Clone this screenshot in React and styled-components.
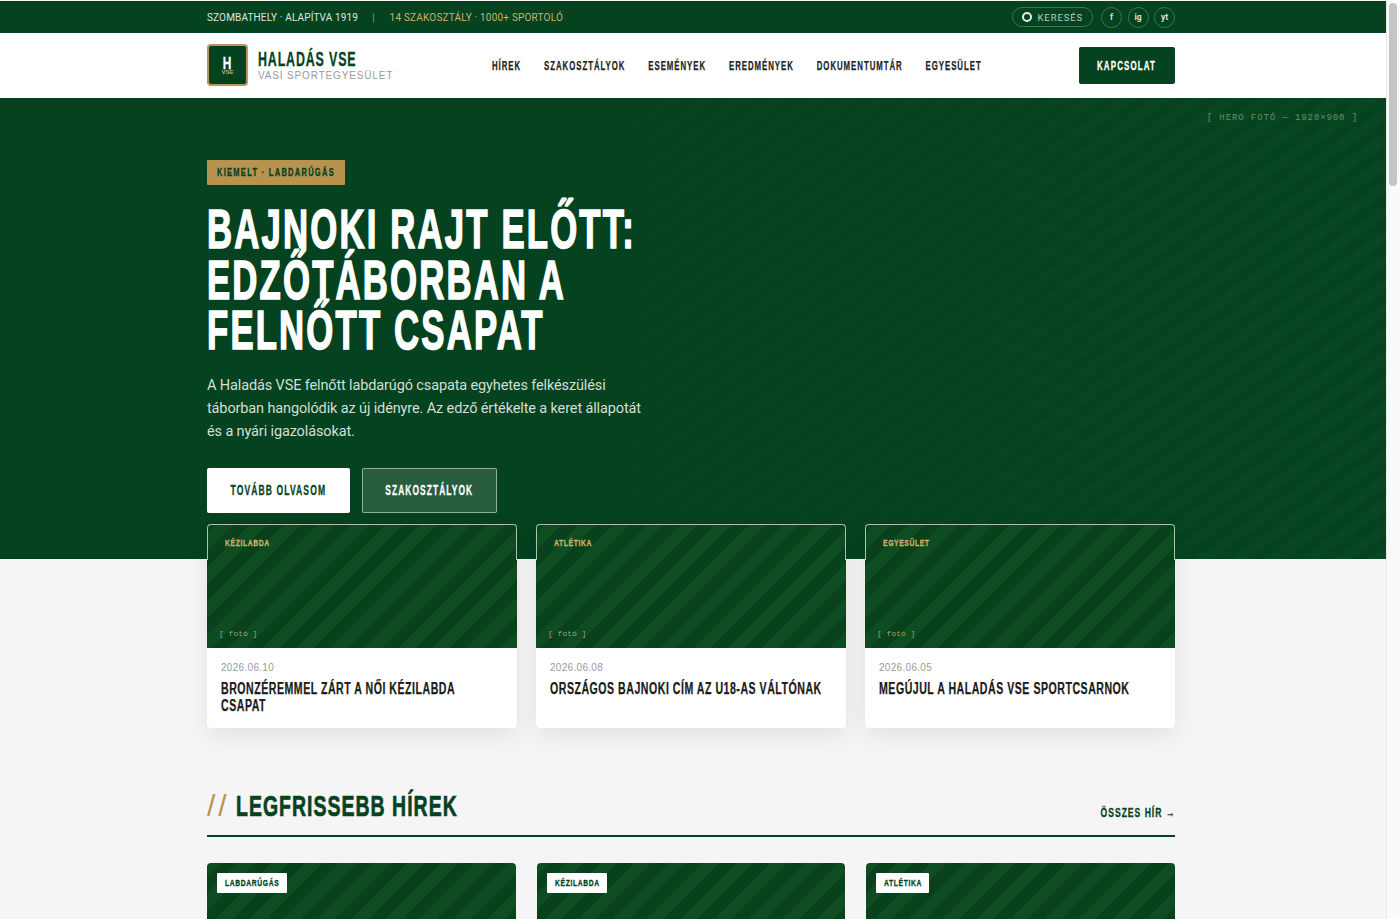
import React from 'react';
import styled, { createGlobalStyle } from 'styled-components';

const GlobalStyle = createGlobalStyle`
html, body { margin: 0; padding: 0; height: 100%; overflow: hidden; background: #fff; }
* { box-sizing: border-box; }
#root { height: 919px; overflow: hidden; }
`

const cond = `"Liberation Sans", Arial, sans-serif`;
const body = `Roboto, "Noto Sans", sans-serif`;
const arial = `"Liberation Sans", Arial, sans-serif`;
const mono = `"Liberation Mono", monospace`;

// no condensed face is installed, so headline text is squeezed horizontally
const Squeeze = styled.span`
display: inline-block;
flex: none;
white-space: nowrap;
transform: scaleX(${p => p.$s});
transform-origin: ${p => p.$o || 'left'} center;
-webkit-text-stroke: ${p => p.$stroke || '.3px'};
`
const Shell = styled.div`
display: flex;
height: 919px;
`
const Page = styled.div`
width: 1386px;
flex: none;
background: #f5f5f5;
padding-top: 1px;
overflow: hidden;
`
const ScrollTrack = styled.div`
flex: 1;
background: #fafafa;
border-left: 1px solid #ececec;
padding: 3px 3px 0 2px;
`
const ScrollThumb = styled.div`
height: 183px;
width: 8px;
border-radius: 4px;
background: #c4c4c4;
`
const Wrap = styled.div`
width: 968px;
margin-left: 207px;
display: flex;
align-items: center;
`
const TopBar = styled.div`
background: #05421f;
height: 32px;
display: flex;
align-items: center;
`
const TopLeft = styled.span`
font-family: ${body};
font-size: 10px;
letter-spacing: .15px;
color: #dfe8e0;
`
const TopDivider = styled.span`
font-family: ${body};
font-size: 10px;
color: #7fa088;
margin: 0 15px 0 14px;
`
const TopGold = styled.span`
font-family: ${body};
font-size: 10px;
letter-spacing: .2px;
color: #cbb36a;
`
const TopRight = styled.div`
margin-left: auto;
display: flex;
align-items: center;
gap: 5.5px;
`
const SearchPill = styled.div`
width: 81px;
height: 20px;
border: 1px solid #3f7556;
border-radius: 10px;
display: flex;
align-items: center;
gap: 6px;
padding-left: 9px;
margin-right: 3px;
font-family: ${body};
font-size: 9.5px;
letter-spacing: .9px;
color: #b9cfbf;
`
const SearchRing = styled.i`
width: 10px;
height: 10px;
border: 2px solid #e4ece6;
border-radius: 50%;
`
const Social = styled.div`
width: 21px;
height: 21px;
border: 1px solid #3f7556;
border-radius: 50%;
display: flex;
align-items: center;
justify-content: center;
font-family: ${body};
font-size: 8.5px;
font-weight: 700;
color: #d5e2d8;
`
const Header = styled.div`
background: #fff;
height: 65px;
display: flex;
align-items: center;
`
const Logo = styled.div`
width: 41px;
height: 42px;
flex: none;
margin-bottom: 2px;
background: #05421f;
border: 2px solid #b8975a;
border-radius: 4px;
display: flex;
flex-direction: column;
align-items: center;
justify-content: center;
color: #fff;
font-family: ${cond};
font-weight: 700;
font-size: 17px;
line-height: 11px;
padding-top: 3px;
`
const LogoSub = styled.span`
font-size: 6px;
line-height: 6px;
color: #c9ad6b;
`
const Brand = styled.div`
margin-left: 10px;
width: 234px;
flex: none;
`
const BrandName = styled.div`
font-family: ${cond};
font-weight: 700;
font-size: 20px;
line-height: 20px;
letter-spacing: 1.4px;
margin-top: -2px;
color: #05421f;
`
const BrandSub = styled.div`
font-family: ${arial};
font-size: 10px;
line-height: 10px;
margin-top: 2px;
letter-spacing: .85px;
color: #9a9a9a;
`
const Nav = styled.nav`
flex: none;
width: 500px;
display: flex;
margin-bottom: 1px;
`
const NavRow = styled.div`
display: flex;
flex: none;
gap: 38px;
white-space: nowrap;
transform: scaleX(.602);
transform-origin: left center;
-webkit-text-stroke: .25px;
`
const NavItem = styled.a`
font-family: ${cond};
font-weight: 700;
font-size: 13px;
letter-spacing: 1.6px;
color: #222;
`
const ContactBtn = styled.a`
margin-left: auto;
width: 96px;
height: 37px;
background: #05421f;
border-radius: 2px;
display: flex;
align-items: center;
justify-content: center;
font-family: ${cond};
font-weight: 700;
font-size: 13px;
letter-spacing: 1.9px;
color: #fff;
`
const Hero = styled.section`
position: relative;
height: 461px;
padding: 62px 0 0 207px;
background:
  linear-gradient(90deg, #05421f 38%, rgba(5,66,31,.5) 75%, rgba(5,66,31,.3) 100%),
  repeating-linear-gradient(-35deg, #094925 0 10px, #05421f 10px 20px);
`
const HeroTag = styled.div`
position: absolute;
top: 15px;
right: 28px;
font-family: ${mono};
font-size: 9px;
letter-spacing: .9px;
color: #6f8f62;
`
const Kicker = styled.div`
display: flex;
align-items: center;
width: 138px;
height: 25px;
padding: 0 0 1px 10px;
background: #b8934f;
border-radius: 1px;
font-family: ${cond};
font-weight: 700;
font-size: 11px;
letter-spacing: 1.9px;
color: #05421f;
`
const Title = styled.h1`
margin: 19px 0 0;
font-family: ${cond};
font-weight: 700;
font-size: 56px;
line-height: 50.5px;
letter-spacing: 3.5px;
white-space: nowrap;
color: #fff;
transform: scaleX(.62);
transform-origin: left center;
-webkit-text-stroke: 1.6px;
`
const Lead = styled.p`
margin: 18px 0 0;
width: 440px;
font-family: ${body};
font-size: 14.5px;
line-height: 23px;
letter-spacing: -.13px;
color: #d3dfd6;
`
const HeroBtns = styled.div`
display: flex;
gap: 12px;
margin-top: 25px;
`
const HeroBtn = styled.a`
height: 45px;
width: ${p => p.$w}px;
display: flex;
align-items: center;
justify-content: center;
border-radius: 2px;
font-family: ${cond};
font-weight: 700;
font-size: 14px;
letter-spacing: 1.8px;
color: ${p => p.$ghost ? '#fff' : '#05421f'};
background: ${p => p.$ghost ? 'rgba(255,255,255,.14)' : '#fff'};
border: ${p => p.$ghost ? '1px solid rgba(255,255,255,.5)' : 'none'};
`
const FeatureGrid = styled.div`
margin: -35px 0 0 207px;
width: 968px;
display: grid;
grid-template-columns: repeat(3, 1fr);
gap: 19px;
position: relative;
`
const stripes = `repeating-linear-gradient(-45deg, #0e4c21 0 12px, #08411b 12px 24px)`;
const FeatureCard = styled.article`
height: 204px;
background: #fff;
border-radius: 4px;
box-shadow: 0 8px 24px rgba(0,0,0,.08);
overflow: hidden;
`
const FeatureImage = styled.div`
height: 124px;
position: relative;
background: ${stripes};
&::before {
  content: '';
  position: absolute;
  inset: 0 0 auto 0;
  height: 35px;
  border: 1px solid #a9c4ae;
  border-bottom: none;
  border-radius: 4px 4px 0 0;
}
`
const FeatureCat = styled.span`
position: absolute;
top: 13px;
left: 18px;
font-family: ${cond};
font-weight: 700;
font-size: 9.5px;
letter-spacing: .8px;
color: #cbb36a;
`
const PhotoNote = styled.span`
position: absolute;
left: 12px;
bottom: 10px;
font-family: ${mono};
font-size: 8px;
color: #9aa873;
`
const FeatureBody = styled.div`
padding: 13px 14px 0;
`
const DateText = styled.div`
font-family: ${arial};
font-size: 10px;
line-height: 13px;
letter-spacing: .3px;
color: #9a9a9a;
`
const FeatureTitle = styled.h3`
margin: 6px 0 0;
width: 418px;
font-family: ${cond};
font-weight: 700;
font-size: 16px;
line-height: 17px;
letter-spacing: .8px;
color: #1a1a1a;
transform: scaleX(.66);
transform-origin: left center;
-webkit-text-stroke: .25px;
`
const SectionHead = styled.div`
margin: 60px 0 0 207px;
width: 968px;
height: 49px;
padding-bottom: 11px;
border-bottom: 2px solid #05421f;
display: flex;
align-items: center;
justify-content: space-between;
`
const SectionTitle = styled.h2`
margin: 0;
display: flex;
align-items: center;
font-family: ${cond};
font-weight: 700;
font-size: 30px;
letter-spacing: 1.6px;
color: #05421f;
`
const Slashes = styled.span`
font-weight: 400;
width: 29px;
letter-spacing: 3px;
color: #b8934f;
`
const AllLink = styled.a`
font-family: ${cond};
font-weight: 700;
font-size: 13px;
letter-spacing: 1.5px;
color: #05421f;
margin-top: 12px;
`
const NewsGrid = styled.div`
margin: 26px 0 0 207px;
width: 968px;
display: grid;
grid-template-columns: repeat(3, 1fr);
gap: 21px;
`
const NewsImage = styled.div`
height: 180px;
padding: 10px;
border-radius: 4px 4px 0 0;
background: ${stripes};
`
const NewsCat = styled.span`
display: flex;
align-items: center;
width: ${p => p.$w}px;
height: 20px;
padding: 0 0 1px 8px;
background: #fff;
border-radius: 1px;
font-family: ${cond};
font-weight: 700;
font-size: 9.5px;
letter-spacing: .9px;
color: #05421f;
`

const features = [
  { cat: 'KÉZILABDA', date: '2026.06.10', title: 'BRONZÉREMMEL ZÁRT A NŐI KÉZILABDA CSAPAT' },
  { cat: 'ATLÉTIKA', date: '2026.06.08', title: 'ORSZÁGOS BAJNOKI CÍM AZ U18-AS VÁLTÓNAK' },
  { cat: 'EGYESÜLET', date: '2026.06.05', title: 'MEGÚJUL A HALADÁS VSE SPORTCSARNOK' },
];
const news = [
  { cat: 'LABDARÚGÁS', w: 70 },
  { cat: 'KÉZILABDA', w: 60 },
  { cat: 'ATLÉTIKA', w: 53 },
];
const navItems = ['HÍREK', 'SZAKOSZTÁLYOK', 'ESEMÉNYEK', 'EREDMÉNYEK', 'DOKUMENTUMTÁR', 'EGYESÜLET'];

function App() {
  return (
    <Shell>
      <GlobalStyle />
      <Page>
        <TopBar>
          <Wrap>
            <TopLeft>SZOMBATHELY · ALAPÍTVA 1919</TopLeft>
            <TopDivider>|</TopDivider>
            <TopGold>14 SZAKOSZTÁLY · 1000+ SPORTOLÓ</TopGold>
            <TopRight>
              <SearchPill><SearchRing />KERESÉS</SearchPill>
              <Social>f</Social>
              <Social>ig</Social>
              <Social>yt</Social>
            </TopRight>
          </Wrap>
        </TopBar>
        <Header>
          <Wrap>
            <Logo>
              <Squeeze $s={.7} $o="center">H</Squeeze>
              <LogoSub>VSE</LogoSub>
            </Logo>
            <Brand>
              <BrandName><Squeeze $s={.62}>HALADÁS VSE</Squeeze></BrandName>
              <BrandSub>VASI SPORTEGYESÜLET</BrandSub>
            </Brand>
            <Nav>
              <NavRow>
                {navItems.map(n => <NavItem key={n}>{n}</NavItem>)}
              </NavRow>
            </Nav>
            <ContactBtn><Squeeze $s={.61} $o="center">KAPCSOLAT</Squeeze></ContactBtn>
          </Wrap>
        </Header>
        <Hero>
          <HeroTag>[ HERO FOTÓ — 1920×900 ]</HeroTag>
          <Kicker><Squeeze $s={.68}>KIEMELT · LABDARÚGÁS</Squeeze></Kicker>
          <Title>BAJNOKI RAJT ELŐTT:<br />EDZŐTÁBORBAN A<br />FELNŐTT CSAPAT</Title>
          <Lead>A Haladás VSE felnőtt labdarúgó csapata egyhetes felkészülési táborban hangolódik az új idényre. Az edző értékelte a keret állapotát és a nyári igazolásokat.</Lead>
          <HeroBtns>
            <HeroBtn $w={143}><Squeeze $s={.61} $o="center">TOVÁBB OLVASOM</Squeeze></HeroBtn>
            <HeroBtn $w={135} $ghost><Squeeze $s={.6} $o="center">SZAKOSZTÁLYOK</Squeeze></HeroBtn>
          </HeroBtns>
        </Hero>
        <FeatureGrid>
          {features.map(f => (
            <FeatureCard key={f.cat}>
              <FeatureImage>
                <FeatureCat><Squeeze $s={.72}>{f.cat}</Squeeze></FeatureCat>
                <PhotoNote>[ fotó ]</PhotoNote>
              </FeatureImage>
              <FeatureBody>
                <DateText>{f.date}</DateText>
                <FeatureTitle>{f.title}</FeatureTitle>
              </FeatureBody>
            </FeatureCard>
          ))}
        </FeatureGrid>
        <SectionHead>
          <SectionTitle>
            <Slashes>//</Slashes>
            <Squeeze $s={.648} $stroke=".7px">LEGFRISSEBB HÍREK</Squeeze>
          </SectionTitle>
          <AllLink><Squeeze $s={.66} $o="right">ÖSSZES HÍR →</Squeeze></AllLink>
        </SectionHead>
        <NewsGrid>
          {news.map(c => (
            <NewsImage key={c.cat}>
              <NewsCat $w={c.w}><Squeeze $s={.71}>{c.cat}</Squeeze></NewsCat>
            </NewsImage>
          ))}
        </NewsGrid>
      </Page>
      <ScrollTrack><ScrollThumb /></ScrollTrack>
    </Shell>
  );
}

export default App;
